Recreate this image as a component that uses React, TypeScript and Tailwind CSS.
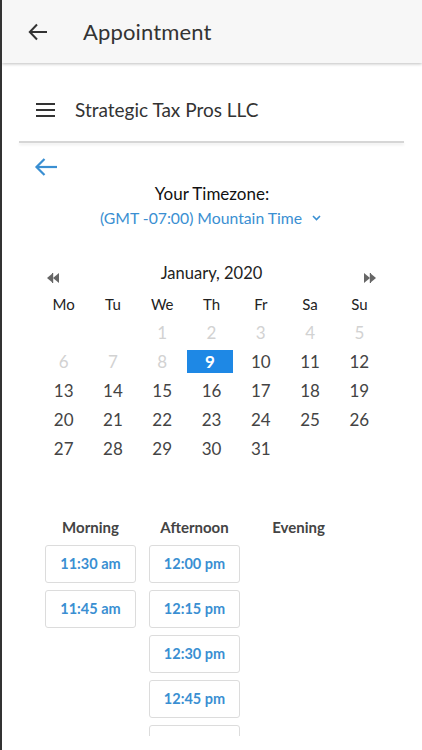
import React from "react";

const weekdays = ["Mo", "Tu", "We", "Th", "Fr", "Sa", "Su"];

type Day = { n: number | null; off?: boolean };

const weeks: Day[][] = [
  [{ n: null }, { n: null }, { n: 1, off: true }, { n: 2, off: true }, { n: 3, off: true }, { n: 4, off: true }, { n: 5, off: true }],
  [{ n: 6, off: true }, { n: 7, off: true }, { n: 8, off: true }, { n: 9 }, { n: 10 }, { n: 11 }, { n: 12 }],
  [{ n: 13 }, { n: 14 }, { n: 15 }, { n: 16 }, { n: 17 }, { n: 18 }, { n: 19 }],
  [{ n: 20 }, { n: 21 }, { n: 22 }, { n: 23 }, { n: 24 }, { n: 25 }, { n: 26 }],
  [{ n: 27 }, { n: 28 }, { n: 29 }, { n: 30 }, { n: 31 }, { n: null }, { n: null }],
];

// last afternoon slot is scrolled out of view, only its top edge shows
const slots: { label: string; times: string[] }[] = [
  { label: "Morning", times: ["11:30 am", "11:45 am"] },
  { label: "Afternoon", times: ["12:00 pm", "12:15 pm", "12:30 pm", "12:45 pm", ""] },
  { label: "Evening", times: [] },
];

export default function App() {
  const selected = 9;

  return (
    <div
      className="w-[422px] h-[750px] overflow-hidden bg-white border-l-2 border-[#333] flex flex-col"
      style={{ fontFamily: "Lato, 'Open Sans', sans-serif" }}
    >
      {/* Top bar */}
      <header className="h-[63px] flex-none flex items-center bg-[#f7f7f7] shadow-[0_1px_3px_rgba(0,0,0,0.25)] relative z-10">
        <svg width="20" height="18" viewBox="0 0 20 18" fill="none" stroke="#333" strokeWidth="2" className="ml-[26px]">
          <path d="M19 9H2" />
          <path d="M9 1.5L1.8 9L9 16.5" />
        </svg>
        <h1 className="ml-[35px] text-[22px] leading-none text-[#333] tracking-[0.15px]">Appointment</h1>
      </header>

      {/* Company row */}
      <div className="flex items-center pt-[35px] pb-[19px]">
        <svg width="20" height="16" viewBox="0 0 20 16" className="ml-[34px]" fill="#333">
          <rect x="0" y="1" width="19" height="2" />
          <rect x="0" y="7" width="19" height="2" />
          <rect x="0" y="13" width="19" height="2" />
        </svg>
        <span className="ml-[19px] text-[19px] leading-[24px] text-[#333]">Strategic Tax Pros LLC</span>
      </div>
      <div className="ml-[17px] w-[385px] h-[2px] bg-[#d6d6d6] shadow-[0_2px_3px_rgba(0,0,0,0.08)]" />

      {/* Back */}
      <div className="mt-[12px] h-[24px] flex items-center">
        <svg width="24" height="20" viewBox="0 0 24 20" fill="none" stroke="#3a8fd2" strokeWidth="2.2" className="ml-[32px]">
          <path d="M23 10H3" />
          <path d="M10.5 2L2.5 10L10.5 18" />
        </svg>
      </div>

      {/* Timezone */}
      <div className="mt-[4px] flex flex-col items-center">
        <p className="text-[17px] leading-[22px] text-[#111]">Your Timezone:</p>
        <button className="mt-[2px] -ml-[3px] flex items-center gap-[10px] text-[15.75px] leading-[22px] text-[#3a8fd2]">
          <span>(GMT -07:00) Mountain Time</span>
          <svg width="9" height="6" viewBox="0 0 9 6" fill="none" stroke="#3a8fd2" strokeWidth="1.6">
            <path d="M1 1l3.5 3.5L8 1" />
          </svg>
        </button>
      </div>

      {/* Calendar */}
      <div className="mt-[33px] ml-[37px] w-[345px]">
        <div className="flex items-start justify-between h-[22px]">
          <svg width="12" height="10" viewBox="0 0 12 10" fill="#666" className="mt-[11px] ml-[8px]">
            <path d="M6 0v10L0 5z" />
            <path d="M12 0v10L6 5z" />
            <rect x="5" y="0" width="1.2" height="10" />
          </svg>
          <span className="text-[16.5px] leading-[22px] text-[#222]">January, 2020</span>
          <svg width="12" height="10" viewBox="0 0 12 10" fill="#666" className="mt-[11px] mr-[8px]">
            <path d="M0 0v10l6-5z" />
            <path d="M6 0v10l6-5z" />
            <rect x="5.8" y="0" width="1.2" height="10" />
          </svg>
        </div>
        <div className="mt-[6px] grid grid-cols-7">
          {weekdays.map((d) => (
            <div key={d} className="h-[28px] flex items-center justify-center text-[15px] text-[#222]">{d}</div>
          ))}
          {weeks.flat().map((d, i) => (
            <div key={i} className="h-[29px] flex items-center justify-center">
              {d.n === selected ? (
                <span className="w-[46px] h-[23px] flex items-center justify-center bg-[#1e88e5] text-white font-bold text-[17px] -ml-[3px]">
                  {d.n}
                </span>
              ) : (
                <span className={`text-[17px] ${d.off ? "text-[#d2d2d2]" : "text-[#444]"}`}>{d.n ?? ""}</span>
              )}
            </div>
          ))}
        </div>
      </div>

      {/* Time slots */}
      <div className="mt-[54px] ml-[43px] h-[219px] overflow-hidden flex gap-[13px]">
        {slots.map((col) => (
          <div key={col.label} className="w-[91px] flex flex-col">
            <p className="h-[20px] leading-[20px] text-center text-[15px] font-bold text-[#444]">{col.label}</p>
            <div className="mt-[8px] flex flex-col gap-[7px]">
              {col.times.map((t, i) => (
                <button
                  key={i}
                  className="h-[38px] w-[91px] flex-none rounded-[3px] border border-[#dcdcdc] bg-white text-[14.5px] font-bold text-[#3a8fd2]"
                >
                  {t}
                </button>
              ))}
            </div>
          </div>
        ))}
      </div>
    </div>
  );
}
